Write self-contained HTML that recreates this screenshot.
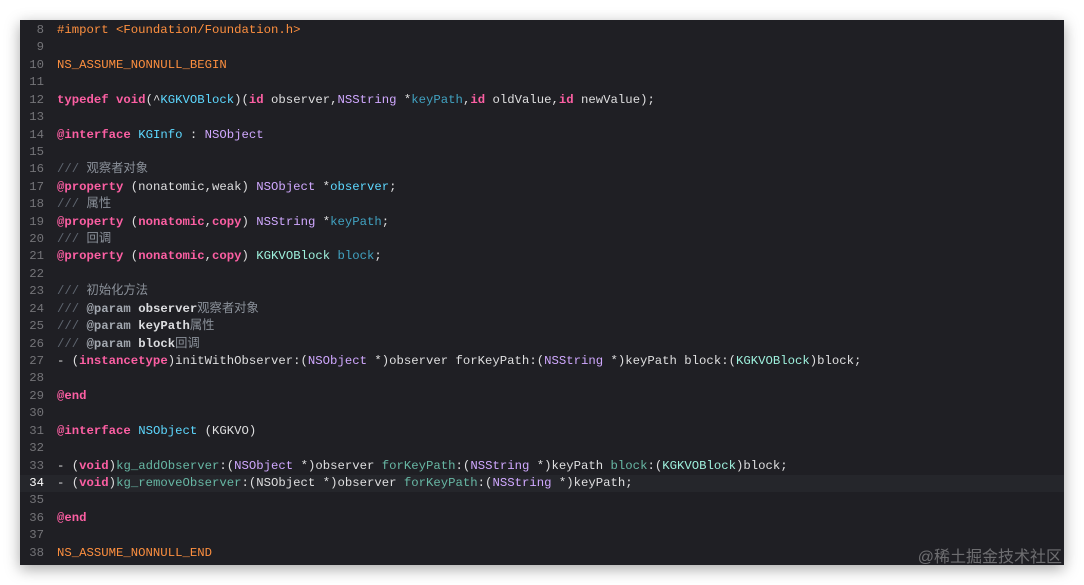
<!DOCTYPE html>
<html><head><meta charset="utf-8"><style>
body{margin:0;background:#fff;width:1084px;height:585px;overflow:hidden;position:relative}
.p{position:absolute;left:20px;top:20px;width:1044px;height:545px;background:#1f1f24;box-shadow:0 4px 14px rgba(0,0,0,.35)}
.c{position:absolute;left:0;top:2px;width:1044px;font-family:"Liberation Mono","Noto Sans CJK SC",monospace;font-size:12.3px;color:#dfdfe0}
.l{height:17.43px;line-height:17.43px;white-space:pre;position:relative}
.n{display:inline-block;width:24px;text-align:right;color:#747478;margin-right:13px}
.h{background:#25262b}.h .n{color:#fff}
.k{color:#fc5fa3;font-weight:bold}.pp{color:#fd8f3f}.cl{color:#d0a8ff}.t{color:#9ef1dd}.tb{color:#5dd8ff}.pr{color:#41a1c0}.m{color:#67b7a4}.cm{color:#5f6670}.cz{color:#8a9099}.cb{color:#a3a8b0;font-weight:bold}.cw{color:#dcdde0;font-weight:bold}
.w{position:absolute;right:22px;bottom:18px;font-family:"Liberation Sans","Noto Sans CJK SC",sans-serif;font-size:16px;color:rgba(255,255,255,.35)}
</style></head><body>
<div class="p"><div class="c">
<div class="l"><span class="n">8</span><span class="pp">#import &lt;Foundation/Foundation.h&gt;</span></div>
<div class="l"><span class="n">9</span></div>
<div class="l"><span class="n">10</span><span class="pp">NS_ASSUME_NONNULL_BEGIN</span></div>
<div class="l"><span class="n">11</span></div>
<div class="l"><span class="n">12</span><span class="k">typedef</span> <span class="k">void</span>(^<span class="tb">KGKVOBlock</span>)(<span class="k">id</span> observer,<span class="cl">NSString</span> *<span class="pr">keyPath</span>,<span class="k">id</span> oldValue,<span class="k">id</span> newValue);</div>
<div class="l"><span class="n">13</span></div>
<div class="l"><span class="n">14</span><span class="k">@interface</span> <span class="tb">KGInfo</span> : <span class="cl">NSObject</span></div>
<div class="l"><span class="n">15</span></div>
<div class="l"><span class="n">16</span><span class="cm">/// </span><span class="cz">观察者对象</span></div>
<div class="l"><span class="n">17</span><span class="k">@property</span> (nonatomic,weak) <span class="cl">NSObject</span> *<span class="tb">observer</span>;</div>
<div class="l"><span class="n">18</span><span class="cm">/// </span><span class="cz">属性</span></div>
<div class="l"><span class="n">19</span><span class="k">@property</span> (<span class="k">nonatomic</span>,<span class="k">copy</span>) <span class="cl">NSString</span> *<span class="pr">keyPath</span>;</div>
<div class="l"><span class="n">20</span><span class="cm">/// </span><span class="cz">回调</span></div>
<div class="l"><span class="n">21</span><span class="k">@property</span> (<span class="k">nonatomic</span>,<span class="k">copy</span>) <span class="t">KGKVOBlock</span> <span class="pr">block</span>;</div>
<div class="l"><span class="n">22</span></div>
<div class="l"><span class="n">23</span><span class="cm">/// </span><span class="cz">初始化方法</span></div>
<div class="l"><span class="n">24</span><span class="cm">/// </span><span class="cb">@param</span> <span class="cw">observer</span><span class="cz">观察者对象</span></div>
<div class="l"><span class="n">25</span><span class="cm">/// </span><span class="cb">@param</span> <span class="cw">keyPath</span><span class="cz">属性</span></div>
<div class="l"><span class="n">26</span><span class="cm">/// </span><span class="cb">@param</span> <span class="cw">block</span><span class="cz">回调</span></div>
<div class="l"><span class="n">27</span>- (<span class="k">instancetype</span>)initWithObserver:(<span class="cl">NSObject</span> *)observer forKeyPath:(<span class="cl">NSString</span> *)keyPath block:(<span class="t">KGKVOBlock</span>)block;</div>
<div class="l"><span class="n">28</span></div>
<div class="l"><span class="n">29</span><span class="k">@end</span></div>
<div class="l"><span class="n">30</span></div>
<div class="l"><span class="n">31</span><span class="k">@interface</span> <span class="tb">NSObject</span> (KGKVO)</div>
<div class="l"><span class="n">32</span></div>
<div class="l"><span class="n">33</span>- (<span class="k">void</span>)<span class="m">kg_addObserver</span>:(<span class="cl">NSObject</span> *)observer <span class="m">forKeyPath</span>:(<span class="cl">NSString</span> *)keyPath <span class="m">block</span>:(<span class="t">KGKVOBlock</span>)block;</div>
<div class="l h"><span class="n">34</span>- (<span class="k">void</span>)<span class="m">kg_removeObserver</span>:(NSObject *)observer <span class="m">forKeyPath</span>:(<span class="cl">NSString</span> *)keyPath;</div>
<div class="l"><span class="n">35</span></div>
<div class="l"><span class="n">36</span><span class="k">@end</span></div>
<div class="l"><span class="n">37</span></div>
<div class="l"><span class="n">38</span><span class="pp">NS_ASSUME_NONNULL_END</span></div>
</div></div>
<div class="w">@稀土掘金技术社区</div>
</body></html>
